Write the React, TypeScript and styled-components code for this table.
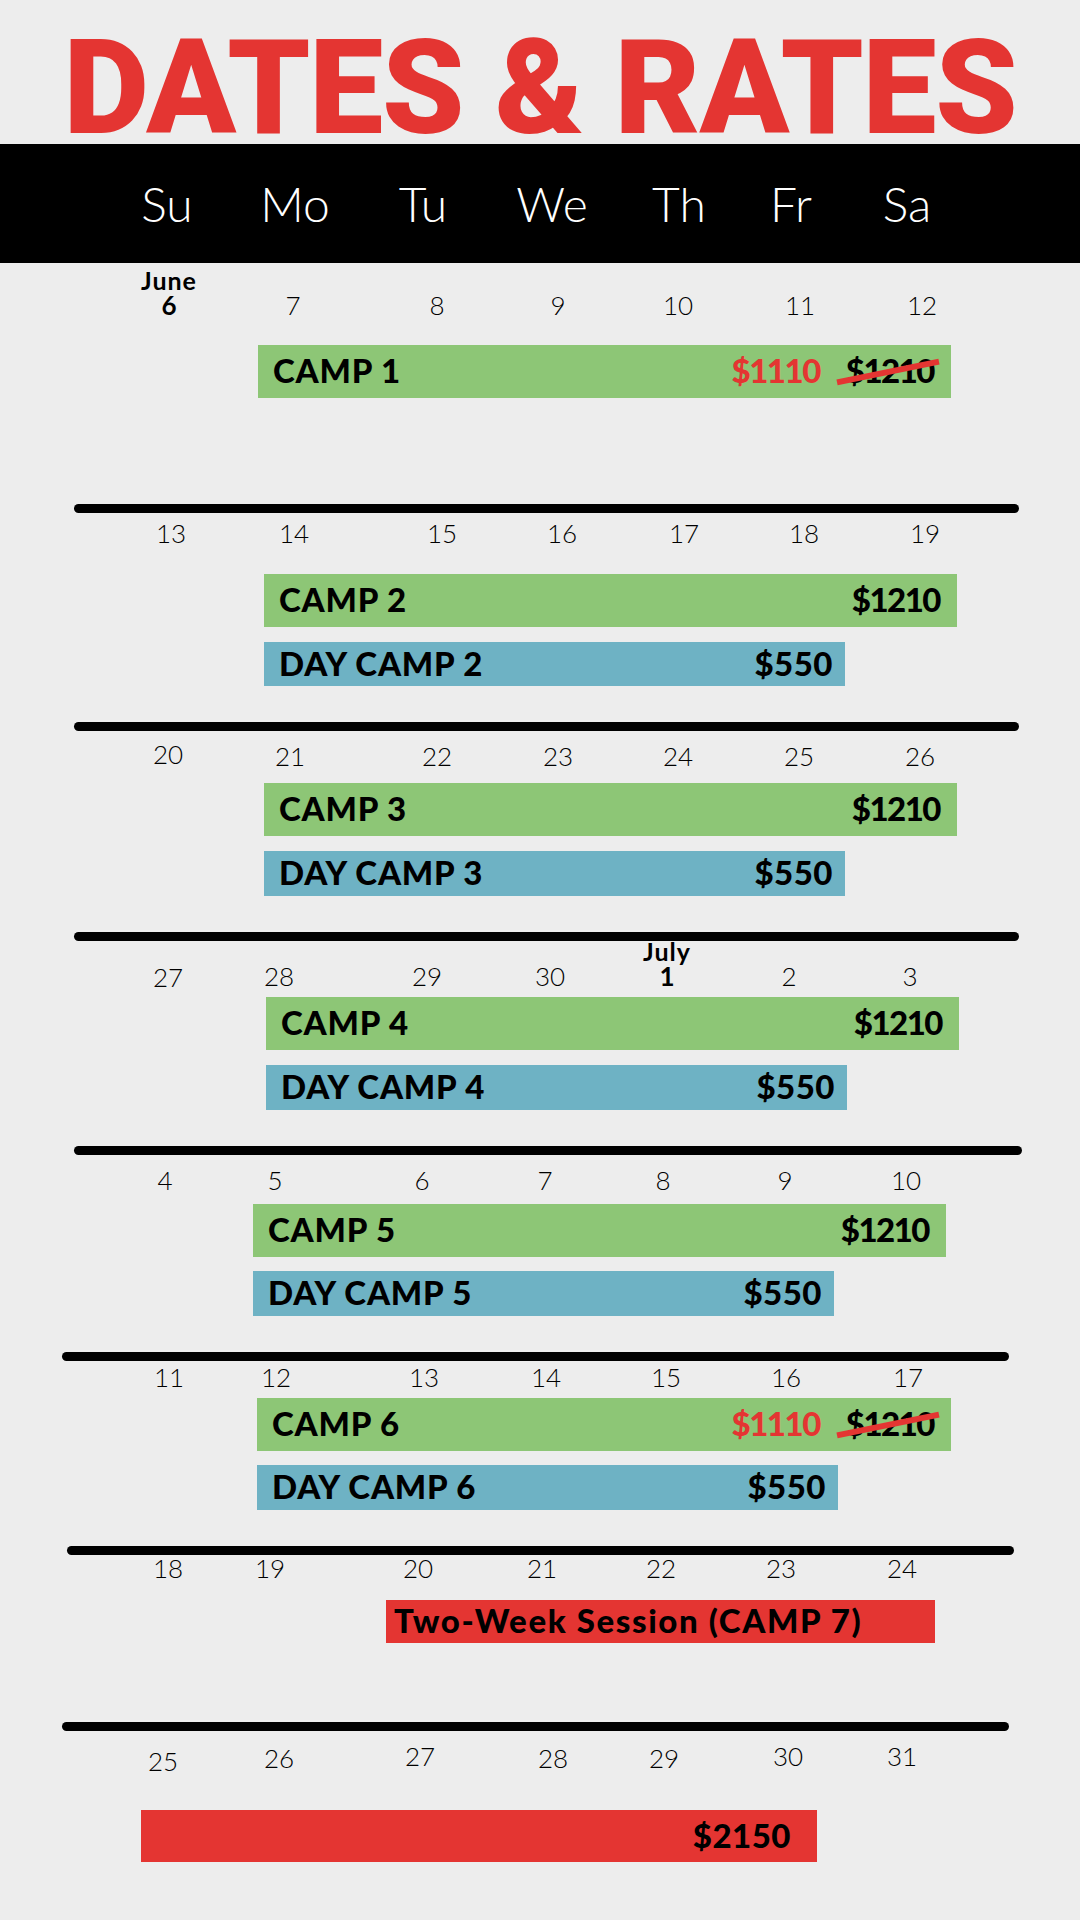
import * as React from 'react';
import styled, { createGlobalStyle } from 'styled-components';

const GREEN = '#8dc676';
const BLUE = '#6eb2c4';
const RED = '#e43532';

const CELL = 90;

// build a grid template that puts a CELL-wide column around each centre
const template = (centers: number[]) => {
  let prev = 0;
  return centers
    .map((c) => {
      const spacer = c - CELL / 2 - prev;
      prev = c + CELL / 2;
      return `${spacer}px ${CELL}px`;
    })
    .join(' ');
};

const GlobalStyle = createGlobalStyle`
  html, body {
    margin: 0;
    padding: 0;
    background: #ededed;
  }
  * { box-sizing: border-box; }
`;

const Page = styled.div`
  width: 1080px;
  min-height: 1920px;
  background: #ededed;
  overflow: hidden;
  font-family: Lato, 'Liberation Sans', sans-serif;
  color: #000;
`;

const Title = styled.h1`
  margin: 0;
  padding-top: 32px;
  height: 144px;
  line-height: 112px;
  font-family: Roboto, 'Liberation Sans', sans-serif;
  font-weight: 900;
  font-size: 132px;
  letter-spacing: -1.2px;
  color: ${RED};
  text-align: center;
  white-space: nowrap;
`;

const DayBar = styled.div<{ $cols: string }>`
  display: grid;
  grid-template-columns: ${(p) => p.$cols};
  align-items: center;
  height: 119px;
  background: #000;
  color: #fff;
  font-size: 48px;
  font-weight: 300;
`;

const DayName = styled.div<{ $col: number }>`
  grid-column: ${(p) => p.$col};
  text-align: center;
  line-height: 1;
`;

const DateRow = styled.div<{ $cols: string; $mt: number }>`
  display: grid;
  grid-template-columns: ${(p) => p.$cols};
  align-items: end;
  margin-top: ${(p) => p.$mt}px;
  font-size: 26px;
`;

const DateCell = styled.div<{ $col: number; $shift: number }>`
  grid-column: ${(p) => p.$col};
  display: flex;
  flex-direction: column;
  align-items: center;
  transform: translateY(${(p) => p.$shift}px);
`;

const Month = styled.span`
  font-weight: 700;
  font-size: 25px;
  line-height: 23px;
  letter-spacing: 1px;
`;

const DayNum = styled.span<{ $bold: boolean }>`
  line-height: 26px;
  font-weight: ${(p) => (p.$bold ? 700 : 300)};
`;

const Bar = styled.div<{
  $left: number;
  $width: number;
  $height: number;
  $color: string;
  $mt: number;
  $pl: number;
  $pr: number;
  $end?: boolean;
}>`
  display: flex;
  align-items: center;
  justify-content: ${(p) => (p.$end ? 'flex-end' : 'space-between')};
  margin-top: ${(p) => p.$mt}px;
  margin-left: ${(p) => p.$left}px;
  width: ${(p) => p.$width}px;
  height: ${(p) => p.$height}px;
  padding: 0 ${(p) => p.$pr}px 2px ${(p) => p.$pl}px;
  background: ${(p) => p.$color};
  font-weight: 900;
  font-size: 33px;
  line-height: 1;
  white-space: nowrap;
`;

const Label = styled.span<{ $spacing: number }>`
  letter-spacing: ${(p) => p.$spacing}px;
`;

const Prices = styled.div`
  display: flex;
  align-items: center;
  gap: 26px;
`;

const Price = styled.span<{ $tight: boolean; $sale?: boolean }>`
  letter-spacing: ${(p) => (p.$tight ? -1.5 : 0.5)}px;
  color: ${(p) => (p.$sale ? RED : '#000')};
`;

const OldPrice = styled(Price)`
  position: relative;

  &::after {
    content: '';
    position: absolute;
    left: -10px;
    right: -6px;
    top: calc(50% - 2px);
    height: 6px;
    background: ${RED};
    transform: rotate(-11.5deg);
  }
`;

const Divider = styled.div<{ $left: number; $width: number; $mt: number }>`
  margin-top: ${(p) => p.$mt}px;
  margin-left: ${(p) => p.$left}px;
  width: ${(p) => p.$width}px;
  height: 9px;
  background: #000;
  border-radius: 5px;
`;

interface DateInfo {
  d: string;
  month?: string;
  shift?: number;
}

interface BarInfo {
  label?: string;
  spacing?: number;
  price: string;
  sale?: string;
  left: number;
  width: number;
  height: number;
  color: string;
  mt: number;
  pl?: number;
  pr?: number;
  end?: boolean;
}

interface WeekInfo {
  dates: (string | DateInfo)[];
  centers: number[];
  rowMt: number;
  bars: BarInfo[];
  divider?: { left: number; width: number; mt: number };
}

const camp = (n: number, left: number, mt: number, sale?: string): BarInfo => ({
  label: `CAMP ${n}`,
  price: '$1210',
  sale,
  left,
  width: 693,
  height: 53,
  color: GREEN,
  mt,
  pl: 15,
  pr: 17,
});

const dayCamp = (n: number, left: number, mt: number): BarInfo => ({
  label: `DAY CAMP ${n}`,
  price: '$550',
  left,
  width: 581,
  height: 45,
  color: BLUE,
  mt,
  pl: 15,
  pr: 12,
});

const weeks: WeekInfo[] = [
  {
    dates: [{ d: '6', month: 'June' }, '7', '8', '9', '10', '11', '12'],
    centers: [169, 293, 437, 558, 678, 800, 922],
    rowMt: 6,
    bars: [camp(1, 258, 27, '$1110')],
    divider: { left: 74, width: 945, mt: 106 },
  },
  {
    dates: ['13', '14', '15', '16', '17', '18', '19'],
    centers: [171, 294, 442, 562, 684, 804, 925],
    rowMt: 7,
    bars: [camp(2, 264, 28), { ...dayCamp(2, 264, 15), height: 44 }],
    divider: { left: 74, width: 945, mt: 36 },
  },
  {
    dates: [{ d: '20', shift: -2 }, '21', '22', '23', '24', '25', '26'],
    centers: [168, 290, 437, 558, 678, 799, 920],
    rowMt: 12,
    bars: [camp(3, 264, 14), dayCamp(3, 264, 15)],
    divider: { left: 74, width: 945, mt: 36 },
  },
  {
    dates: [{ d: '27', shift: 1 }, '28', '29', '30', { d: '1', month: 'July' }, '2', '3'],
    centers: [168, 279, 427, 550, 667, 789, 910],
    rowMt: -1,
    bars: [camp(4, 266, 8), dayCamp(4, 266, 15)],
    divider: { left: 74, width: 948, mt: 36 },
  },
  {
    dates: ['4', '5', '6', '7', '8', '9', '10'],
    centers: [165, 275, 422, 545, 663, 785, 906],
    rowMt: 12,
    bars: [camp(5, 253, 11), dayCamp(5, 253, 14)],
    divider: { left: 62, width: 947, mt: 36 },
  },
  {
    dates: ['11', '12', '13', '14', '15', '16', '17'],
    centers: [169, 276, 424, 546, 666, 786, 908],
    rowMt: 3,
    bars: [{ ...camp(6, 257, 8, '$1110'), width: 694 }, dayCamp(6, 257, 14)],
    divider: { left: 67, width: 947, mt: 36 },
  },
  {
    dates: ['18', '19', '20', '21', '22', '23', '24'],
    centers: [168, 270, 418, 542, 661, 781, 902],
    rowMt: 0,
    bars: [
      {
        label: 'Two-Week Session (CAMP 7)',
        spacing: 1.6,
        price: '',
        left: 386,
        width: 549,
        height: 43,
        color: RED,
        mt: 19,
        pl: 8,
        pr: 8,
      },
    ],
    divider: { left: 62, width: 947, mt: 79 },
  },
  {
    dates: [
      { d: '25', shift: 5 },
      { d: '26', shift: 2 },
      '27',
      { d: '28', shift: 2 },
      { d: '29', shift: 2 },
      '30',
      '31',
    ],
    centers: [163, 279, 420, 553, 664, 788, 902],
    rowMt: 12,
    bars: [
      {
        price: '$2150',
        left: 141,
        width: 676,
        height: 52,
        color: RED,
        mt: 41,
        pr: 26,
        end: true,
      },
    ],
  },
];

const dayNames = ['Su', 'Mo', 'Tu', 'We', 'Th', 'Fr', 'Sa'];
const dayCenters = [167, 295, 423, 552, 679, 791, 907];

// prices with several narrow "1"s sit tighter in the original
const isTight = (s: string) => s.split('1').length > 2;

const CampBar: React.FC<{ bar: BarInfo }> = ({ bar }) => (
  <Bar
    $left={bar.left}
    $width={bar.width}
    $height={bar.height}
    $color={bar.color}
    $mt={bar.mt}
    $pl={bar.pl ?? 0}
    $pr={bar.pr ?? 0}
    $end={bar.end}
  >
    {bar.label && <Label $spacing={bar.spacing ?? 0.8}>{bar.label}</Label>}
    {bar.sale ? (
      <Prices>
        <Price $tight $sale>
          {bar.sale}
        </Price>
        <OldPrice $tight>{bar.price}</OldPrice>
      </Prices>
    ) : (
      bar.price && <Price $tight={isTight(bar.price)}>{bar.price}</Price>
    )}
  </Bar>
);

const Week: React.FC<{ week: WeekInfo }> = ({ week }) => (
  <section>
    <DateRow $cols={template(week.centers)} $mt={week.rowMt}>
      {week.dates.map((item, i) => {
        const info: DateInfo = typeof item === 'string' ? { d: item } : item;
        return (
          <DateCell key={info.d} $col={i * 2 + 2} $shift={info.shift ?? 0}>
            {info.month && <Month>{info.month}</Month>}
            <DayNum $bold={!!info.month}>{info.d}</DayNum>
          </DateCell>
        );
      })}
    </DateRow>
    {week.bars.map((bar, i) => (
      <CampBar key={i} bar={bar} />
    ))}
    {week.divider && (
      <Divider
        $left={week.divider.left}
        $width={week.divider.width}
        $mt={week.divider.mt}
      />
    )}
  </section>
);

const App: React.FC = () => (
  <>
    <GlobalStyle />
    <Page>
      <Title>DATES &amp; RATES</Title>
      <DayBar $cols={template(dayCenters)}>
        {dayNames.map((name, i) => (
          <DayName key={name} $col={i * 2 + 2}>
            {name}
          </DayName>
        ))}
      </DayBar>
      {weeks.map((week, i) => (
        <Week key={i} week={week} />
      ))}
    </Page>
  </>
);

export default App;
